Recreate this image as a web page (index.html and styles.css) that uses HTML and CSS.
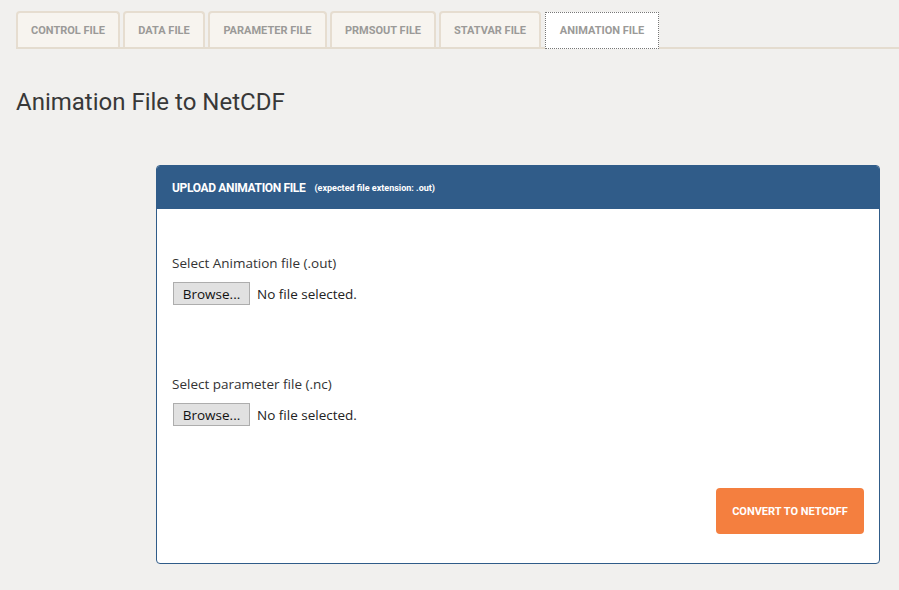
FILE: index.html
```html
<!DOCTYPE html>
<html>
<head>
<meta charset="utf-8">
<link rel="stylesheet" href="styles.css">
</head>
<body>
<nav class="tabs">
  <div class="tab">CONTROL FILE</div>
  <div class="tab">DATA FILE</div>
  <div class="tab">PARAMETER FILE</div>
  <div class="tab">PRMSOUT FILE</div>
  <div class="tab">STATVAR FILE</div>
  <div class="tab active">ANIMATION FILE</div>
</nav>
<h1 class="title">Animation File to NetCDF</h1>
<section class="panel">
  <header class="panel-head">
    <span class="head-main">UPLOAD ANIMATION FILE</span>
    <span class="head-sub">(expected file extension: .out)</span>
  </header>
  <div class="panel-body">
    <div class="field">
      <div class="label">Select Animation file (.out)</div>
      <div class="file-row"><span class="browse">Browse...</span><span class="nofile">No file selected.</span></div>
    </div>
    <div class="field second">
      <div class="label">Select parameter file (.nc)</div>
      <div class="file-row"><span class="browse">Browse...</span><span class="nofile">No file selected.</span></div>
    </div>
    <div class="actions">
      <button class="convert">CONVERT TO NETCDFF</button>
    </div>
  </div>
</section>
</body>
</html>
```
FILE: styles.css
```css
html, body {
  margin: 0;
  padding: 0;
  background: #f1f0ee;
  font-family: Roboto, "Liberation Sans", sans-serif;
}
.tabs {
  display: flex;
  align-items: flex-end;
  margin: 11px 0 0 16px;
  border-bottom: 2px solid #e4dccf;
  height: 36px;
}
.tab {
  height: 36px;
  box-sizing: border-box;
  display: flex;
  align-items: center;
  justify-content: center;
  white-space: nowrap;
  margin-right: 3px;
  background: #f7f4ef;
  border: 2px solid #e6ddd0;
  border-bottom: none;
  border-radius: 4px 4px 0 0;
  font-size: 11px;
  font-weight: 700;
  color: #9b9a98;
  padding: 0;
}
.tab:nth-child(1) { width: 104px; }
.tab:nth-child(2) { width: 82px; }
.tab:nth-child(3) { width: 119px; }
.tab:nth-child(4) { width: 106px; }
.tab:nth-child(5) { width: 102px; margin-right: 4px; }
.tab.active {
  width: 114px;
  background: #fff;
  border: 1px dotted #777;
  border-radius: 0;
  height: 37px;
  margin-bottom: -2px;
  position: relative;
}
.title {
  margin: 38px 0 0 16px;
  font-size: 24px;
  font-weight: 400;
  color: #383838;
  line-height: 30px;
}
.panel {
  margin: 48px 19px 0 156px;
  background: #fff;
  border: 1px solid #305c89;
  border-radius: 4px;
  overflow: hidden;
}
.panel-head {
  background: #305c89;
  height: 43px;
  display: flex;
  align-items: center;
  padding-left: 15px;
  color: #fff;
}
.head-main {
  font-size: 12px;
  font-weight: 700;
  letter-spacing: -0.35px;
}
.head-sub {
  font-size: 9px;
  font-weight: 700;
  margin-left: 9px;
  margin-top: 1px;
}
.panel-body {
  padding: 44px 15px 29px 15px;
  font-family: "Open Sans", "Liberation Sans", sans-serif;
}
.field.second {
  margin-top: 69px;
}
.label {
  font-size: 13.5px;
  color: #333;
  line-height: 20px;
}
.file-row {
  display: flex;
  align-items: center;
  margin-top: 9px;
}
.browse {
  box-sizing: border-box;
  width: 77px;
  height: 23px;
  margin-left: 1px;
  background: #e1e1e1;
  border: 1px solid #adadad;
  font-size: 13.5px;
  color: #111;
  display: flex;
  align-items: center;
  justify-content: center;
}
.nofile {
  font-size: 13.5px;
  color: #222;
  margin-left: 7px;
}
.actions {
  display: flex;
  justify-content: flex-end;
  margin-top: 62px;
}
.convert {
  width: 148px;
  height: 46px;
  background: #f47f3f;
  color: #fff;
  border: none;
  border-radius: 4px;
  font-family: Roboto, "Liberation Sans", sans-serif;
  font-size: 11px;
  font-weight: 700;
  margin-right: 0;
}
```
